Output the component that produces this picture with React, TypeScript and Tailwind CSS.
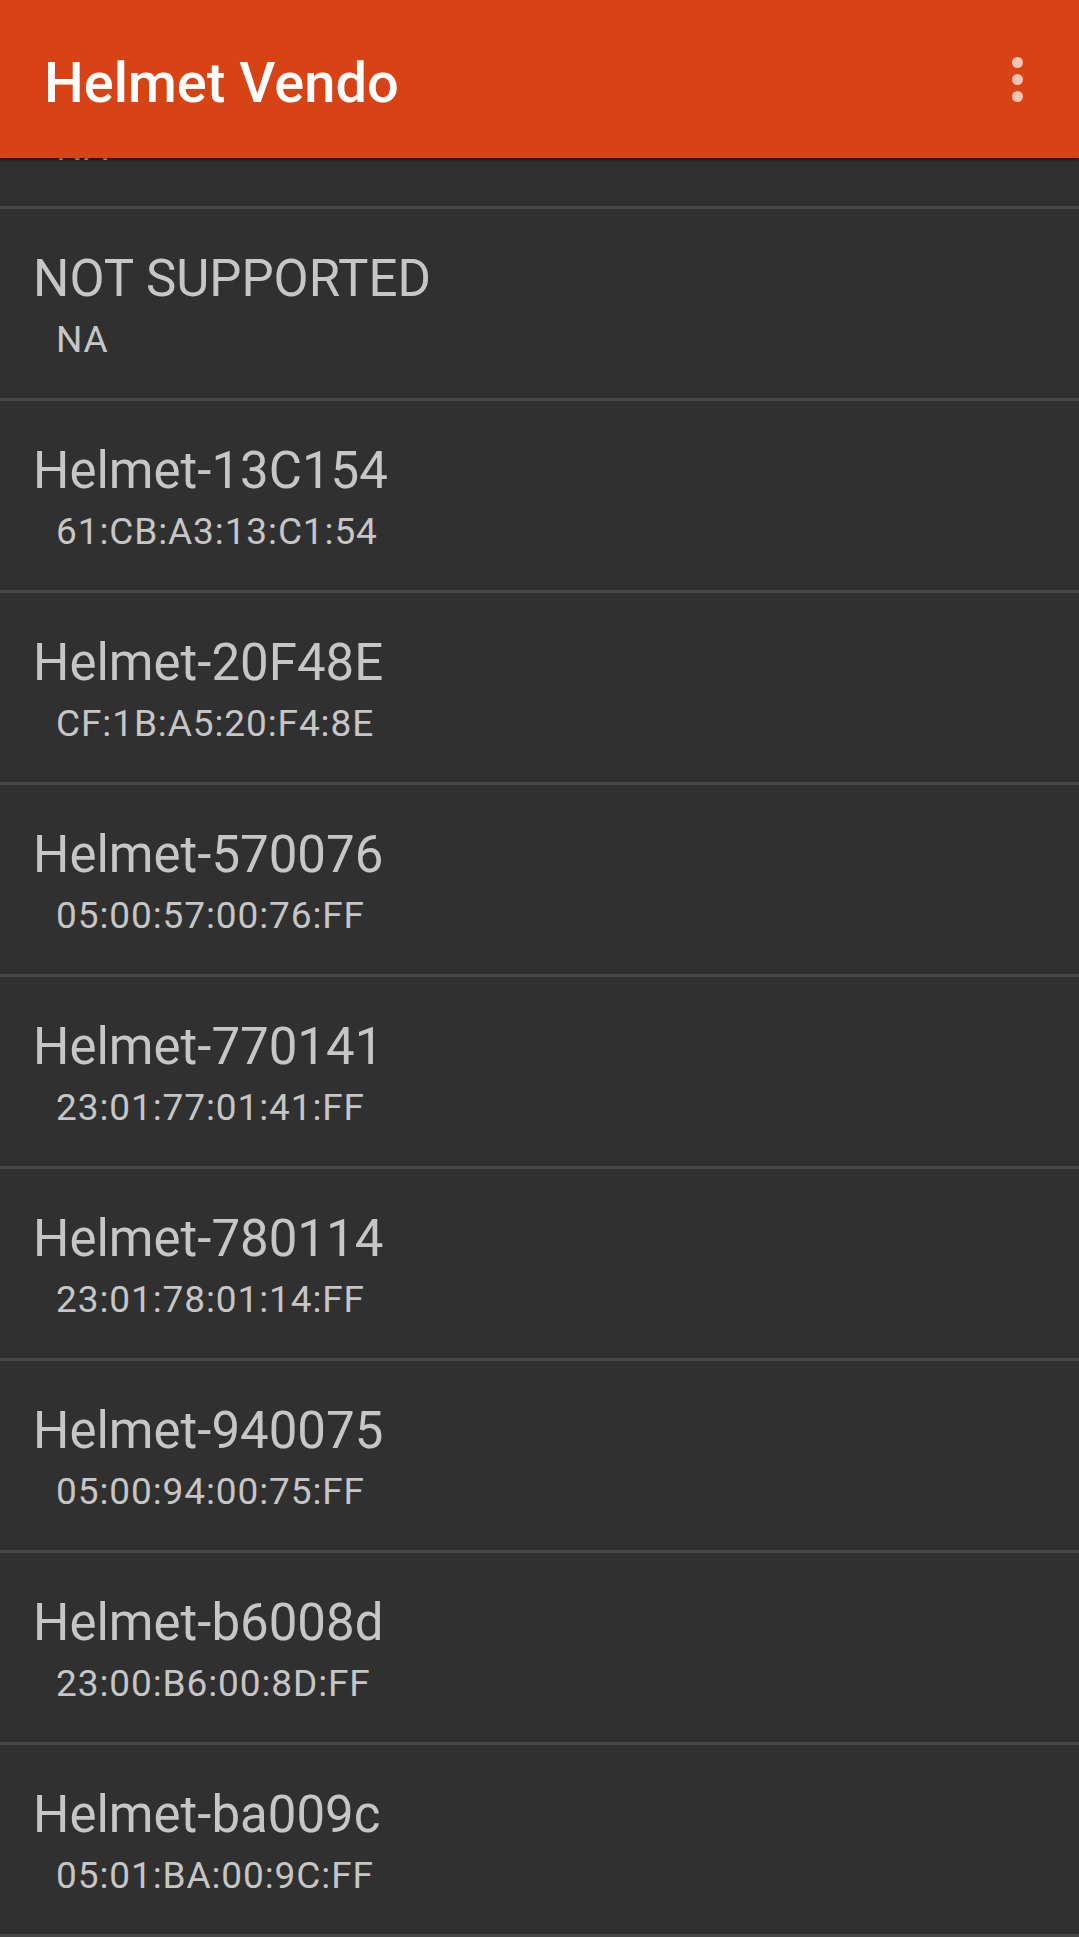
import React from "react";

type Device = { name: string; address: string };

const devices: Device[] = [
  { name: "NOT SUPPORTED", address: "NA" },
  { name: "NOT SUPPORTED", address: "NA" },
  { name: "Helmet-13C154", address: "61:CB:A3:13:C1:54" },
  { name: "Helmet-20F48E", address: "CF:1B:A5:20:F4:8E" },
  { name: "Helmet-570076", address: "05:00:57:00:76:FF" },
  { name: "Helmet-770141", address: "23:01:77:01:41:FF" },
  { name: "Helmet-780114", address: "23:01:78:01:14:FF" },
  { name: "Helmet-940075", address: "05:00:94:00:75:FF" },
  { name: "Helmet-b6008d", address: "23:00:B6:00:8D:FF" },
  { name: "Helmet-ba009c", address: "05:01:BA:00:9C:FF" },
];

const App = () => {
  return (
    <div
      className="h-[1937px] w-full overflow-hidden bg-[#303030] flex flex-col"
      style={{ fontFamily: "Roboto, 'Noto Sans', sans-serif" }}
    >
      {/* toolbar */}
      <div className="relative z-10 h-[158px] shrink-0 bg-[#d84315] flex items-start justify-between shadow-[0_2px_3px_rgba(0,0,0,0.55)]">
        <h1 className="pl-[44px] pt-[50px] text-[56px] leading-[66px] font-medium text-white">
          Helmet Vendo
        </h1>
        <div className="mr-[56px] mt-[57px] flex flex-col gap-[6px]">
          <span className="block w-[11px] h-[11px] rounded-full bg-[#f5c6b6]" />
          <span className="block w-[11px] h-[11px] rounded-full bg-[#f5c6b6]" />
          <span className="block w-[11px] h-[11px] rounded-full bg-[#f5c6b6]" />
        </div>
      </div>

      {/* device list, scrolled so the first row sits under the toolbar */}
      <div className="flex-1 overflow-hidden">
        <div className="-mt-[141px]">
          {devices.map((d, i) => (
            <div
              key={i}
              className="h-[192px] border-b-[3px] border-[#474747] pt-[40px] text-[#c6c6c6]"
            >
              <p className="pl-[33px] text-[51px] leading-[60px]">{d.name}</p>
              <p className="pl-[56px] mt-[10px] text-[37px] leading-[42px] tracking-[0.9px]">
                {d.address}
              </p>
            </div>
          ))}
        </div>
      </div>
    </div>
  );
};

export default App;
